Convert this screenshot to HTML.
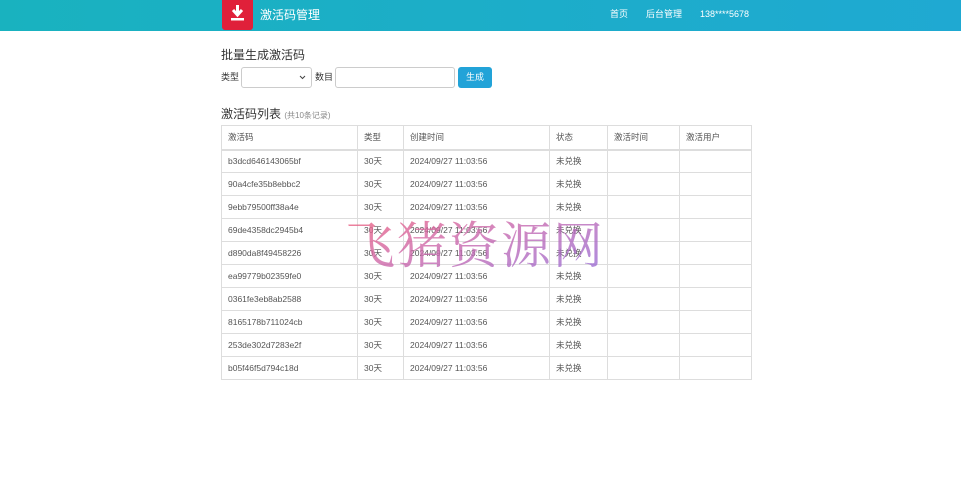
<!DOCTYPE html>
<html><head><meta charset="utf-8"><style>
*{margin:0;padding:0;box-sizing:border-box}
body{width:961px;height:501px;background:#fff;font-family:"Liberation Sans","Noto Sans CJK SC",sans-serif;color:#333;position:relative;overflow:hidden}
.hd{position:absolute;left:0;top:0;width:961px;height:31px;background:linear-gradient(90deg,#19b2bf,#1fa9d2)}
.logo{position:absolute;left:222px;top:0;width:31px;height:30px;background:#e0203a;border-radius:0 0 3px 3px}
.ttl{position:absolute;left:260px;top:6px;color:#fff;font-size:12px}
.nav{position:absolute;top:8px;color:#fff;font-size:9px;line-height:12px}
.a{position:absolute;font-size:9px;line-height:12px}
h3{position:absolute;font-weight:normal;font-size:12px;color:#333}
.sel{position:absolute;left:241px;top:67px;width:71px;height:21px;border:1px solid #ccc;border-radius:3px}
.inp{position:absolute;left:335px;top:67px;width:120px;height:21px;border:1px solid #ccc;border-radius:3px}
.btn{position:absolute;left:458px;top:67px;width:34px;height:21px;background:#22a3d8;border-radius:3px;color:#fff;font-size:9px;text-align:center;line-height:21px}
table{position:absolute;left:221px;top:125px;border-collapse:collapse;font-size:8.5px;color:#555}
td{border:1px solid #ddd;height:23px;padding:0 6px;vertical-align:middle}
tr:first-child td{border-bottom:2px solid #ddd;height:24px}
.wm{position:absolute;left:345px;top:212px;font-family:"Noto Serif CJK SC",serif;font-size:50px;letter-spacing:2px;background:linear-gradient(160deg,#f0607a 0%,#d068a8 40%,#9870d8 100%);-webkit-background-clip:text;background-clip:text;color:transparent;opacity:.8;line-height:60px}
</style></head><body>
<div class="hd">
<div class="logo"><svg width="31" height="30" viewBox="0 0 31 30"><path d="M15.5 5v9M11 10l4.5 5 4.5-5" stroke="#fff" stroke-width="3" fill="none"/><rect x="9" y="18" width="13" height="2.5" fill="#fff"/></svg></div>
<div class="ttl">激活码管理</div>
<div class="nav" style="left:610px">首页</div>
<div class="nav" style="left:646px">后台管理</div>
<div class="nav" style="left:700px;top:8px">138****5678</div>
</div>
<h3 style="left:221px;top:46px">批量生成激活码</h3>
<div class="a" style="left:221px;top:71px">类型</div>
<div class="sel"><svg style="position:absolute;right:5px;top:7px" width="7" height="5"><path d="M1 1l2.5 2.5L6 1" stroke="#444" fill="none"/></svg></div>
<div class="a" style="left:315px;top:71px">数目</div>
<div class="inp"></div>
<div class="btn">生成</div>
<h3 style="left:221px;top:105px">激活码列表 <span style="font-size:8px;color:#888">(共10条记录)</span></h3>
<table>
<tr><td style="width:136px">激活码</td><td style="width:46px">类型</td><td style="width:146px">创建时间</td><td style="width:58px">状态</td><td style="width:72px">激活时间</td><td style="width:72px">激活用户</td></tr>
<tr><td>b3dcd646143065bf</td><td>30天</td><td>2024/09/27 11:03:56</td><td>未兑换</td><td></td><td></td></tr>
<tr><td>90a4cfe35b8ebbc2</td><td>30天</td><td>2024/09/27 11:03:56</td><td>未兑换</td><td></td><td></td></tr>
<tr><td>9ebb79500ff38a4e</td><td>30天</td><td>2024/09/27 11:03:56</td><td>未兑换</td><td></td><td></td></tr>
<tr><td>69de4358dc2945b4</td><td>30天</td><td>2024/09/27 11:03:56</td><td>未兑换</td><td></td><td></td></tr>
<tr><td>d890da8f49458226</td><td>30天</td><td>2024/09/27 11:03:56</td><td>未兑换</td><td></td><td></td></tr>
<tr><td>ea99779b02359fe0</td><td>30天</td><td>2024/09/27 11:03:56</td><td>未兑换</td><td></td><td></td></tr>
<tr><td>0361fe3eb8ab2588</td><td>30天</td><td>2024/09/27 11:03:56</td><td>未兑换</td><td></td><td></td></tr>
<tr><td>8165178b711024cb</td><td>30天</td><td>2024/09/27 11:03:56</td><td>未兑换</td><td></td><td></td></tr>
<tr><td>253de302d7283e2f</td><td>30天</td><td>2024/09/27 11:03:56</td><td>未兑换</td><td></td><td></td></tr>
<tr><td>b05f46f5d794c18d</td><td>30天</td><td>2024/09/27 11:03:56</td><td>未兑换</td><td></td><td></td></tr>
</table>
<div class="wm">飞猪资源网</div>
</body></html>
